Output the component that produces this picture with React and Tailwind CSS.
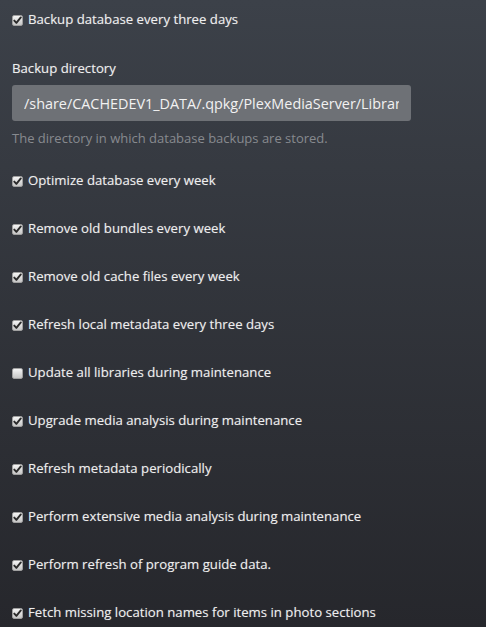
import React from 'react';

const tasks = [
  { label: 'Optimize database every week', checked: true },
  { label: 'Remove old bundles every week', checked: true },
  { label: 'Remove old cache files every week', checked: true },
  { label: 'Refresh local metadata every three days', checked: true },
  { label: 'Update all libraries during maintenance', checked: false },
  { label: 'Upgrade media analysis during maintenance', checked: true },
  { label: 'Refresh metadata periodically', checked: true },
  { label: 'Perform extensive media analysis during maintenance', checked: true },
  { label: 'Perform refresh of program guide data.', checked: true },
  { label: 'Fetch missing location names for items in photo sections', checked: true },
];

const Box = ({ checked }) => (
  <span className="w-[11px] h-[11px] rounded-[2px] bg-gradient-to-b from-[#f4f4f4] to-[#c6c6c6] border border-[#a0a0a0] flex items-center justify-center flex-shrink-0">
    {checked && (
      <svg width="9" height="9" viewBox="0 0 9 9">
        <path d="M1.3 4.6 L3.4 6.9 L7.8 1.4" fill="none" stroke="#2b2b2b" strokeWidth="1.9" strokeLinecap="round" strokeLinejoin="round" />
      </svg>
    )}
  </span>
);

const Row = ({ label, checked }) => (
  <label className="flex items-center gap-[5px] h-[18px] text-[13.2px] text-[#eeeeee] [text-shadow:0_0_1px_rgba(255,255,255,0.35)]">
    <Box checked={checked} />
    <span>{label}</span>
  </label>
);

const App = () => {
  return (
    <div
      className="w-[486px] h-[627px] overflow-hidden bg-gradient-to-b from-[#3c4149] to-[#26272c] px-3 pt-[11px]"
      style={{ fontFamily: '"Open Sans", "Liberation Sans", sans-serif' }}
    >
      <Row label="Backup database every three days" checked />

      <div className="mt-[30px] h-[18px] leading-[18px] text-[13.2px] text-[#eeeeee] [text-shadow:0_0_1px_rgba(255,255,255,0.35)]">
        Backup directory
      </div>
      <input
        readOnly
        value="/share/CACHEDEV1_DATA/.qpkg/PlexMediaServer/Library/Plex Media Server/Plug-in Support/Databases"
        className="block mt-[8px] w-[399px] h-[36px] rounded-[3px] bg-[#6e7176] px-3 text-[14.4px] text-[#f2f2f2] outline-none"
      />
      <div className="mt-[8px] h-[18px] leading-[18px] text-[13px] text-[#878a8f]">
        The directory in which database backups are stored.
      </div>

      <div className="mt-[25px] flex flex-col gap-[30px]">
        {tasks.map((t) => (
          <Row key={t.label} label={t.label} checked={t.checked} />
        ))}
      </div>
    </div>
  );
};

export default App;
